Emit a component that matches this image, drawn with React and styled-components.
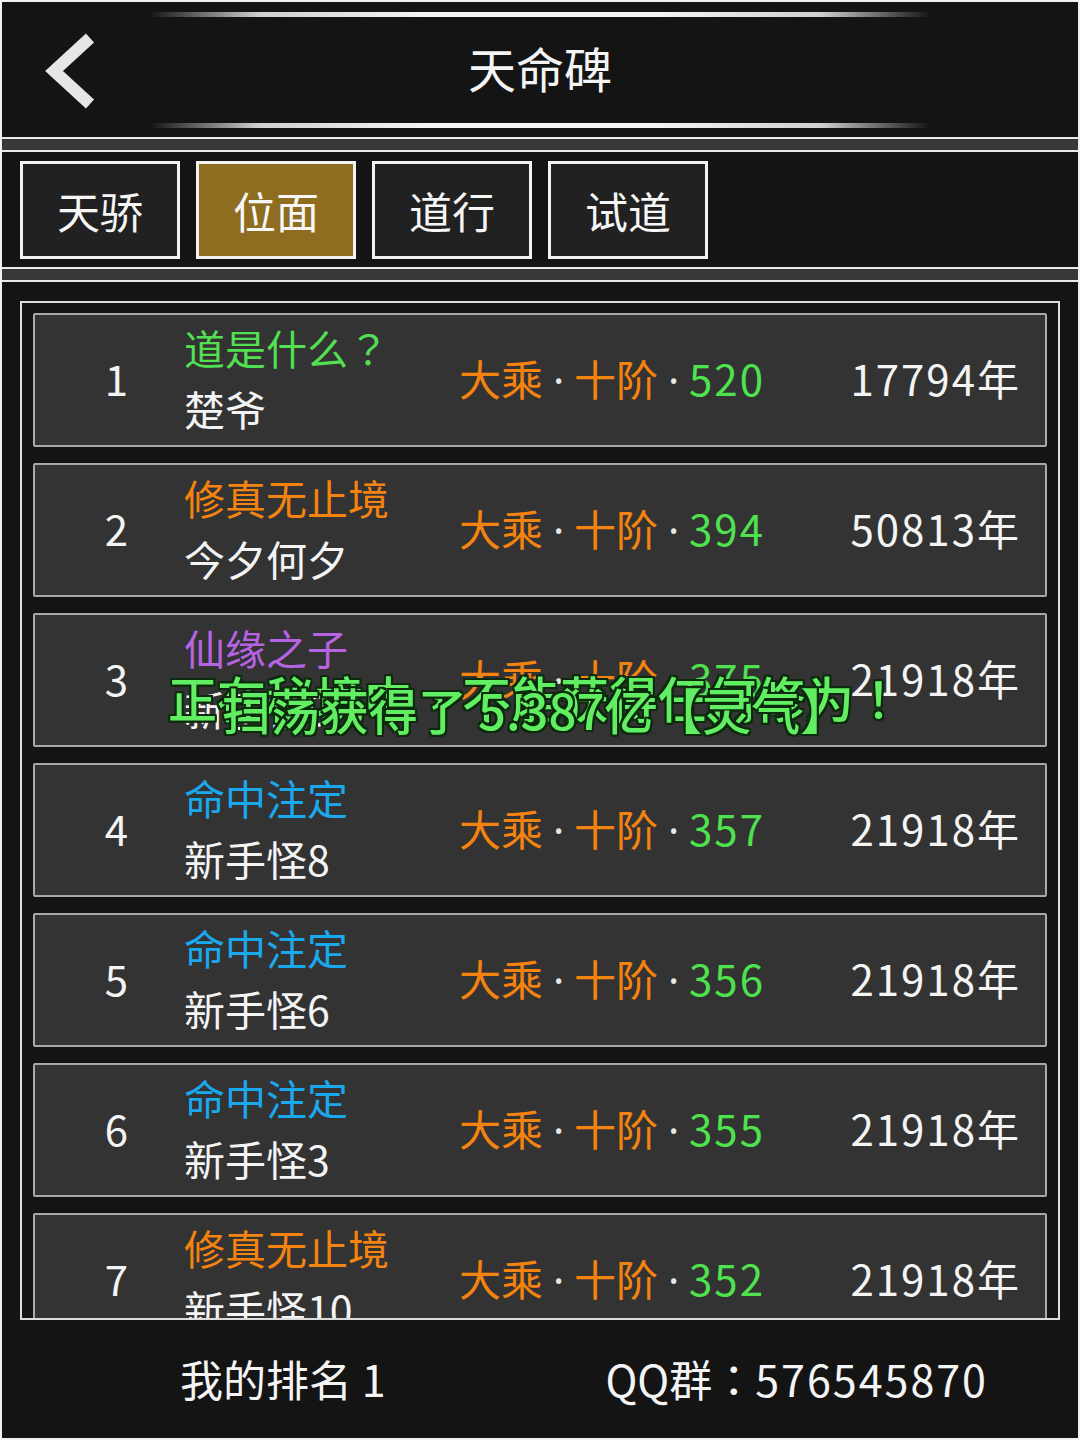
import React from 'react';
import styled, { createGlobalStyle } from 'styled-components';

const GlobalStyle = createGlobalStyle`
    html, body {
        margin: 0;
        padding: 0;
        background: #f2f2f2;
    }
    body {
        font-family: "Noto Sans CJK SC", "Noto Sans", sans-serif;
        color: #fff;
    }
`;

const AppFrame = styled.div`
    position: relative;
    width: 1076px;
    height: 1436px;
    margin: 2px;
    background: #141414;
    display: flex;
    flex-direction: column;
    overflow: hidden;
`;

const Header = styled.header`
    height: 135px;
    box-sizing: border-box;
    padding: 10px 0 9px;
    display: grid;
    grid-template-columns: 148px 1fr 148px;
    grid-template-rows: 5px 1fr 5px;
`;

const GlowLine = styled.div`
    grid-column: 2;
    height: 5px;
    background: linear-gradient(to right, rgba(255,255,255,0) 0%, #cfcfcf 14%, #f4f4f4 35%, #f4f4f4 65%, #cfcfcf 86%, rgba(255,255,255,0) 100%);
    border-radius: 3px;
`;

const BackButton = styled.div`
    grid-column: 1;
    grid-row: 1 / 4;
    display: flex;
    align-items: center;
    padding-left: 42px;
    padding-top: 2px;
`;

const Title = styled.h1`
    grid-column: 2;
    margin: 0;
    padding-bottom: 6px;
    display: flex;
    align-items: center;
    justify-content: center;
    font-size: 48px;
    font-weight: 400;
    color: #f4f4f4;
`;

const Divider = styled.div`
    height: 11px;
    background: #383838;
    border-top: 2px solid #eaeaea;
    border-bottom: 2px solid #eaeaea;
`;

const TabBar = styled.nav`
    height: 115px;
    box-sizing: border-box;
    padding: 9px 18px 8px;
    display: flex;
    gap: 16px;
`;

const Tab = styled.div`
    width: 160px;
    height: 98px;
    box-sizing: border-box;
    border: 3px solid #f2f2f2;
    background: ${p => (p.active ? '#8e6d20' : '#212121')};
    display: flex;
    align-items: center;
    justify-content: center;
    font-size: 43px;
    color: #f6f6f6;
`;

const Content = styled.main`
    padding: 19px 18px 0;
`;

const Panel = styled.div`
    height: 1019px;
    box-sizing: border-box;
    border: 2px solid #dcdcdc;
    padding: 10px 11px 0;
    display: flex;
    flex-direction: column;
    gap: 16px;
    overflow: hidden;
`;

const Row = styled.div`
    flex: 0 0 134px;
    box-sizing: border-box;
    border: 2px solid #a8a8a8;
    border-radius: 2px;
    background: #333333;
    display: grid;
    grid-template-columns: 149px 275px 1fr auto;
    align-items: center;
    padding: 0 26px 5px 0;
    overflow: hidden;
`;

const Rank = styled.div`
    padding-left: 14px;
    text-align: center;
    font-size: 42px;
    color: #f4f4f4;
`;

const NameBlock = styled.div`
    display: flex;
    flex-direction: column;
    font-size: 41px;
    line-height: 61px;
    white-space: nowrap;
`;

const Sect = styled.span`
    color: ${p => p.color};
`;

const Player = styled.span`
    color: #f4f4f4;
`;

// full-width punctuation centred in its cell, as in the original
const Punct = styled.span`
    font-family: "Noto Sans CJK TC", "Noto Sans CJK SC", sans-serif;
`;

const Realm = styled.div`
    font-size: 42px;
    color: #f5830f;
    white-space: nowrap;
`;

const Dot = styled.span`
    display: inline-block;
    width: 31px;
    text-align: center;
    font-family: "Noto Sans", sans-serif;
    color: #e8e8e8;
`;

const Num = styled.span`
    letter-spacing: 2px;
    color: ${p => p.color || 'inherit'};
`;

const Years = styled.div`
    font-size: 42px;
    color: #f4f4f4;
    text-align: right;
    white-space: nowrap;
`;

const Footer = styled.footer`
    flex: 1;
    display: flex;
    align-items: center;
    justify-content: space-between;
    padding: 0 90px 2px 178px;
    font-size: 43px;
    color: #f4f4f4;
`;

const Toast = styled.div`
    position: absolute;
    left: ${p => p.left}px;
    top: ${p => p.top}px;
    font-family: "Noto Sans CJK TC", "Noto Sans CJK SC", sans-serif;
    font-size: 49px;
    font-weight: 500;
    line-height: 1;
    white-space: nowrap;
    color: #62ee62;
    text-shadow:
        2px 0 0 #0c2a0c, -2px 0 0 #0c2a0c, 0 2px 0 #0c2a0c, 0 -2px 0 #0c2a0c,
        2px 2px 0 #0c2a0c, -2px -2px 0 #0c2a0c, 2px -2px 0 #0c2a0c, -2px 2px 0 #0c2a0c;
`;

const SECT_COLORS = {
    green: '#52df52',
    orange: '#f5830f',
    purple: '#b764e4',
    blue: '#1aa8ee',
};

const ranking = [
    { rank: 1, sect: '道是什么', mark: '？', color: 'green', name: '楚爷', level: 520, years: 17794 },
    { rank: 2, sect: '修真无止境', color: 'orange', name: '今夕何夕', level: 394, years: 50813 },
    { rank: 3, sect: '仙缘之子', color: 'purple', name: '新手怪9', level: 375, years: 21918 },
    { rank: 4, sect: '命中注定', color: 'blue', name: '新手怪8', level: 357, years: 21918 },
    { rank: 5, sect: '命中注定', color: 'blue', name: '新手怪6', level: 356, years: 21918 },
    { rank: 6, sect: '命中注定', color: 'blue', name: '新手怪3', level: 355, years: 21918 },
    { rank: 7, sect: '修真无止境', color: 'orange', name: '新手怪10', level: 352, years: 21918 },
];

const tabs = ['天骄', '位面', '道行', '试道'];

const BackIcon = () => (
    <svg width="54" height="78" viewBox="0 0 54 78">
        <polyline points="46,6 10,39 46,72" fill="none" stroke="#e6e6e6" strokeWidth="12" strokeLinejoin="miter" />
    </svg>
);

export default function App() {
    return (
        <AppFrame>
            <GlobalStyle />
            <Header>
                <BackButton><BackIcon /></BackButton>
                <GlowLine />
                <Title>天命碑</Title>
                <GlowLine />
            </Header>
            <Divider />
            <TabBar>
                {tabs.map(t => (
                    <Tab key={t} active={t === '位面'}>{t}</Tab>
                ))}
            </TabBar>
            <Divider />
            <Content>
                <Panel>
                    {ranking.map(r => (
                        <Row key={r.rank}>
                            <Rank>{r.rank}</Rank>
                            <NameBlock>
                                <Sect color={SECT_COLORS[r.color]}>
                                    {r.sect}{r.mark && <Punct>{r.mark}</Punct>}
                                </Sect>
                                <Player>{r.name}</Player>
                            </NameBlock>
                            <Realm>
                                大乘<Dot>·</Dot>十阶<Dot>·</Dot><Num color="#4fe24f">{r.level}</Num>
                            </Realm>
                            <Years><Num>{r.years}</Num>年</Years>
                        </Row>
                    ))}
                </Panel>
            </Content>
            <Footer>
                <span>我的排名 1</span>
                <span>QQ群<Punct>：</Punct><Num>576545870</Num></span>
            </Footer>
            <Toast left={166} top={670}>正在秘境中，不能获得任何修为！</Toast>
            <Toast left={220} top={682}>扫荡获得了 5.387亿【灵气】</Toast>
        </AppFrame>
    );
}
